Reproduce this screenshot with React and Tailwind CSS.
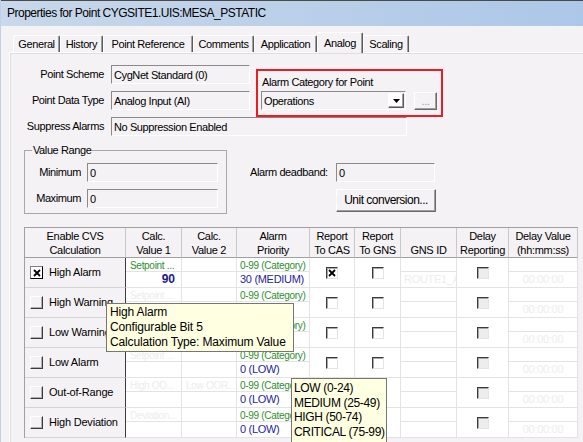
import React from "react";

const TABS = [
  { label: "General", w: "w-[47px]" },
  { label: "History", w: "w-[43px]" },
  { label: "Point Reference", w: "w-[90px]" },
  { label: "Comments", w: "w-[61px]" },
  { label: "Application", w: "w-[63px]" },
  { label: "Analog", w: "w-[46px]", active: true },
  { label: "Scaling", w: "w-[46px]" },
];

const HEAD = [
  ["Enable CVS", "Calculation"],
  ["Calc.", "Value 1"],
  ["Calc.", "Value 2"],
  ["Alarm", "Priority"],
  ["Report", "To CAS"],
  ["Report", "To GNS"],
  ["", "GNS ID"],
  ["Delay", "Reporting"],
  ["Delay Value", "(hh:mm:ss)"],
];

const ROWS = [
  { label: "High Alarm", checked: true, c1: "Setpoint ...", c1on: true, value: "90", pri: "30 (MEDIUM)", cas: true, gns: "ROUTE1_A..." },
  { label: "High Warning", c1: "Setpoint ...", pri: "0 (LOW)" },
  { label: "Low Warning", c1: "Setpoint ...", pri: "0 (LOW)" },
  { label: "Low Alarm", c1: "Setpoint ...", pri: "0 (LOW)" },
  { label: "Out-of-Range", c1: "High OO...", c2: "Low OOR...", pri: "0 (LOW)" },
  { label: "High Deviation", c1: "Deviation...", pri: "0 (LOW)" },
];

const COLS = "grid grid-cols-[101px_56px_55px_73px_45px_46px_56px_52px_69px]";

function Field({ w, children }) {
  return (
    <div className={`${w} h-[19px] flex items-center pl-[2px] pt-[1px] border border-t-[#8a8a8a] border-l-[#8a8a8a] border-b-white border-r-white bg-[#f5f2f5] whitespace-nowrap overflow-hidden`}>
      {children}
    </div>
  );
}

function Label({ w, children }) {
  return <div className={`${w} text-right pr-[1px] whitespace-nowrap`}>{children}</div>;
}

function XMark() {
  return (
    <svg width="8" height="8" viewBox="0 0 8 8" className="block">
      <path d="M1 1L7 7M7 1L1 7" stroke="#000" strokeWidth="1.8" />
    </svg>
  );
}

function RowCheck({ checked }) {
  if (checked) {
    return (
      <span className="w-[13px] h-[13px] shrink-0 flex items-center justify-center bg-white border border-t-[#808080] border-l-[#808080] border-b-black border-r-black">
        <XMark />
      </span>
    );
  }
  return (
    <span className="w-[13px] h-[13px] shrink-0 bg-[#f5f2f5] border border-t-white border-l-white border-b-[#3a3a3a] border-r-[#3a3a3a] shadow-[inset_-1px_-1px_0_#b0b0b0]" />
  );
}

function GridCheck({ checked, dim }) {
  return (
    <span
      className={`w-[12px] h-[12px] flex items-center justify-center border border-t-[#3a3a3a] border-l-[#3a3a3a] border-b-[#e4e4e4] border-r-[#e4e4e4] shadow-[inset_1px_1px_0_#a8a8a8] ${
        dim ? "bg-[#eeecee]" : "bg-white"
      }`}
    >
      {checked && <XMark />}
    </span>
  );
}

function Split({ top, bottom }) {
  return (
    <div className="flex flex-col h-full">
      <div className="h-[14px] border-b border-[#e3e3e3] overflow-hidden whitespace-nowrap leading-[14px]">{top}</div>
      <div className="flex-1 overflow-hidden whitespace-nowrap leading-[14px]">{bottom}</div>
    </div>
  );
}

const cell = "h-[30px] border-r border-b border-[#e3e3e3] bg-white overflow-hidden";

function DataRow({ row }) {
  return (
    <div className={COLS}>
      <div className="h-[30px] border-r border-r-[#3c3c3c] border-b border-b-[#d4d4d4] bg-[#f5f2f5] flex items-center pl-[5px] gap-[6px] whitespace-nowrap tracking-[-0.2px]">
        <RowCheck checked={row.checked} />
        <span>{row.label}</span>
      </div>
      <div className={cell}>
        <Split
          top={
            <span className={`pl-[4px] text-[10px] tracking-[-0.3px] ${row.c1on ? "text-[#2b8f2b]" : "text-[#eeebee]"}`}>
              {row.c1}
            </span>
          }
          bottom={
            row.value && (
              <div className="text-right pr-[6px] text-[12px] font-bold text-[#1a1a8c] tracking-normal">{row.value}</div>
            )
          }
        />
      </div>
      <div className={cell}>
        <Split top={row.c2 && <span className="pl-[4px] text-[10px] tracking-[-0.3px] text-[#eeebee]">{row.c2}</span>} />
      </div>
      <div className={cell}>
        <Split
          top={<span className="pl-[3px] text-[10px] tracking-[-0.3px] text-[#2b8f2b]">0-99 (Category)</span>}
          bottom={<span className="pl-[3px] text-[#25259c]">{row.pri}</span>}
        />
      </div>
      <div className={`${cell} flex items-center justify-center`}>
        <GridCheck checked={row.cas} />
      </div>
      <div className={`${cell} flex items-center justify-center`}>
        <GridCheck />
      </div>
      <div className={cell}>
        <Split bottom={row.gns && <span className="pl-[3px] text-[#efecef]">{row.gns}</span>} />
      </div>
      <div className={`${cell} flex items-center justify-center`}>
        <GridCheck dim />
      </div>
      <div className={cell}>
        <Split bottom={<div className="text-center text-[#efecef]">00:00:00</div>} />
      </div>
    </div>
  );
}

function RaisedButton({ w, h, children, className = "" }) {
  return (
    <div
      className={`${w} ${h} flex items-center justify-center bg-[#f5f2f5] border border-t-white border-l-white border-b-[#696969] border-r-[#696969] shadow-[inset_-1px_-1px_0_#a0a0a0] ${className}`}
    >
      {children}
    </div>
  );
}

export default function App() {
  return (
    <div className="relative w-[583px] h-[442px] overflow-hidden bg-[#f5f2f5] border-l border-[#bdd0e7] font-['Liberation_Sans',Arial,sans-serif] text-[11px] leading-[13px] tracking-[-0.4px] text-black">
      {/* Title bar */}
      <div className="h-[26px] border-t border-[#4a4a4a] bg-linear-to-r from-[#c9d8ea] to-[#acc7e8] pl-[6px] flex items-center text-[12px] tracking-[-0.5px]">
        Properties for Point CYGSITE1.UIS:MESA_PSTATIC
      </div>

      <div className="ml-[8px]">
        {/* Tabs */}
        <div className="h-[20px] mt-[6px] pl-[4px] flex items-end">
          {TABS.map((t) =>
            t.active ? (
              <div
                key={t.label}
                className={`${t.w} h-[21px] -mb-px relative z-10 flex items-center justify-center bg-[#f5f2f5] border-t border-l border-white border-r border-r-[#5a5a5a] rounded-t-[2px] shadow-[inset_-1px_0_0_#a0a0a0]`}
              >
                {t.label}
              </div>
            ) : (
              <div
                key={t.label}
                className={`${t.w} h-[17px] flex items-center justify-center border-t border-l border-white border-r border-r-[#5a5a5a] rounded-t-[2px] shadow-[inset_-1px_0_0_#a0a0a0]`}
              >
                {t.label}
              </div>
            )
          )}
        </div>

        {/* Tab page */}
        <div className="h-[390px] border-t border-l border-white shadow-[inset_1px_1px_0_#e0dde0] pt-[12px]">
          <div className="flex h-[46px]">
            <div className="flex flex-col gap-[7px]">
              <div className="flex items-center">
                <Label w="w-[95px]">Point Scheme</Label>
                <div className="ml-[6px]">
                  <Field w="w-[139px]">CygNet Standard (0)</Field>
                </div>
              </div>
              <div className="flex items-center">
                <Label w="w-[95px]">Point Data Type</Label>
                <div className="ml-[6px]">
                  <Field w="w-[139px]">Analog Input (AI)</Field>
                </div>
              </div>
            </div>

            {/* Alarm category, highlighted */}
            <div className="ml-[6px] mt-[4px] w-[187px] h-[48px] shrink-0 border-2 border-[#ec1c24] pl-[3px] pt-[5px]">
              <div className="pl-[1px] whitespace-nowrap">Alarm Category for Point</div>
              <div className="flex mt-[2px]">
                <div className="w-[145px] h-[19px] flex items-center justify-between border border-t-[#8a8a8a] border-l-[#8a8a8a] border-b-white border-r-white bg-[#f5f2f5]">
                  <span className="pl-[2px] pt-[1px]">Operations</span>
                  <span className="w-[16px] h-[15px] mr-[1px] flex items-center justify-center bg-white border border-t-white border-l-white border-b-[#5a5a5a] border-r-[#5a5a5a] shadow-[inset_-1px_-1px_0_#a0a0a0]">
                    <svg width="7" height="4" viewBox="0 0 7 4" className="block">
                      <path d="M0 0H7L3.5 4Z" fill="#000" />
                    </svg>
                  </span>
                </div>
                <RaisedButton w="w-[23px]" h="h-[18px]" className="ml-[8px] mt-[1px] text-[#a0a0a0]">
                  ...
                </RaisedButton>
              </div>
            </div>
          </div>

          <div className="mt-[6px] flex items-center">
            <Label w="w-[95px]">Suppress Alarms</Label>
            <div className="ml-[6px]">
              <Field w="w-[296px]">No Suppression Enabled</Field>
            </div>
          </div>

          {/* Value range + deadband */}
          <div className="flex mt-[8px] ml-[14px]">
            <fieldset className="w-[203px] border border-[#aaa7aa]">
              <legend className="ml-[7px] px-[1px]">Value Range</legend>
              <div className="flex flex-col gap-[7px] pt-[6px] pb-[5px]">
                <div className="flex items-center">
                  <Label w="w-[57px]">Minimum</Label>
                  <div className="ml-[5px]">
                    <Field w="w-[131px]">0</Field>
                  </div>
                </div>
                <div className="flex items-center">
                  <Label w="w-[57px]">Maximum</Label>
                  <div className="ml-[5px]">
                    <Field w="w-[131px]">0</Field>
                  </div>
                </div>
              </div>
            </fieldset>

            <div className="ml-[23px] mt-[19px]">
              <div className="flex items-center">
                <div className="w-[86px] whitespace-nowrap">Alarm deadband:</div>
                <Field w="w-[99px]">0</Field>
              </div>
              <RaisedButton w="w-[100px]" h="h-[23px]" className="ml-[86px] mt-[7px] text-[12px] tracking-[-0.5px]">
                Unit conversion...
              </RaisedButton>
            </div>
          </div>

          {/* Calculation grid */}
          <div className="mt-[13px] ml-[14px] w-[554px] border-t border-l border-[#a0a0a0] tracking-[-0.3px]">
            <div className={COLS}>
              {HEAD.map((h, i) => (
                <div
                  key={i}
                  className="h-[30px] border-r border-r-[#c8c8c8] border-b border-b-[#a0a0a0] bg-[#f5f2f5] flex flex-col items-center justify-center leading-[14px] whitespace-nowrap"
                >
                  <span className="h-[14px]">{h[0]}</span>
                  <span>{h[1]}</span>
                </div>
              ))}
            </div>
            {ROWS.map((r) => (
              <DataRow key={r.label} row={r} />
            ))}
          </div>
        </div>
      </div>

      {/* Tooltips */}
      <div className="absolute left-[105px] top-[303px] w-[188px] h-[49px] bg-[#ffffe1] border border-[#767676] pl-[3px] pt-[1px] text-[12px] leading-[15px] tracking-[-0.15px] whitespace-nowrap z-20">
        <div>High Alarm</div>
        <div>Configurable Bit 5</div>
        <div>Calculation Type: Maximum Value</div>
      </div>
      <div className="absolute left-[290px] top-[378px] w-[96px] h-[66px] bg-[#ffffe1] border border-[#767676] pl-[2px] pt-[2px] text-[12px] leading-[14.6px] tracking-[-0.35px] whitespace-nowrap z-20">
        <div>LOW (0-24)</div>
        <div>MEDIUM (25-49)</div>
        <div>HIGH (50-74)</div>
        <div>CRITICAL (75-99)</div>
      </div>
    </div>
  );
}
